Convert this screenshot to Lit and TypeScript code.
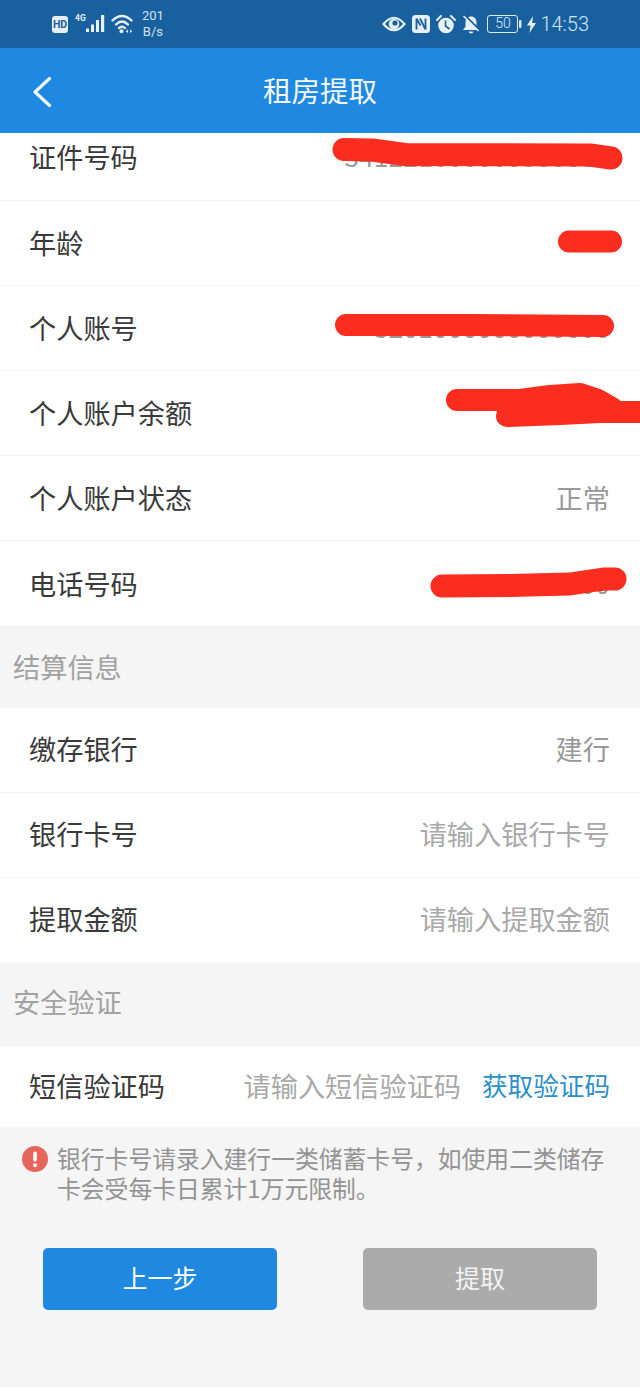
import { LitElement, html, css, svg } from "lit";
import { customElement } from "lit/decorators.js";

@customElement("app-root")
export class AppRoot extends LitElement {
  static styles = css`
    :host { display: block; position: relative; width: 640px; height: 1387px; overflow: hidden; background: #f5f5f5; font-family: "Noto Sans CJK SC", "Noto Sans", sans-serif; }
    .status { height: 48px; box-sizing: border-box; background: #19609f; color: #dcebf7; display: flex; align-items: center; justify-content: space-between; padding: 0 51px 0 52px; }
    .status-group { display: flex; align-items: center; height: 48px; }
    .status svg { display: block; flex: none; }
    .hd { width: 16px; height: 17px; border-radius: 3px; background: #e6f0f8; color: #19609f; font: 700 10.5px/17px "Roboto", sans-serif; text-align: center; }
    .g4 { font: 700 8.5px/9px "Roboto", sans-serif; align-self: flex-start; margin: 14px 0 0 7px; width: 11px; color: #e6f0f8; }
    .bars { margin-top: -1px; }
    .speed { font: 400 13px/15.5px "Roboto", sans-serif; text-align: center; margin-left: 8px; color: #cfe2f2; margin-top: -1px; }
    .batt { box-sizing: border-box; width: 31px; height: 18px; margin-left: 7px; border: 1.4px solid #dcebf7; border-radius: 3px; font: 300 14px/15px "Roboto", sans-serif; text-align: center; }
    .time { font: 300 20px/24px "Roboto", sans-serif; margin-left: 4px; color: #d3e5f3; }
    .ml1 { margin-left: 1px; }
    .ml5 { margin-left: 5px; }
    .ml6 { margin-left: 6px; }
    .header { height: 85px; box-sizing: border-box; padding-bottom: 2px; background: #1f88e0; color: #f3f9fe; display: flex; align-items: center; justify-content: center; position: relative; font-size: 28.5px; }
    .back { position: absolute; left: 33px; top: 29px; }
    .row { height: 85px; box-sizing: border-box; background: #fff; border-bottom: 1.5px solid #f4f4f4; display: flex; align-items: center; justify-content: space-between; padding: 0 30px 2px 29px; font-size: 27.2px; color: #3a3a3a; }
    .row.first { height: 67.5px; align-items: flex-start; padding-top: 3px; line-height: 40px; }
    .row.tall { height: 85.2px; }
    .row.low { padding-bottom: 4px; }
    .row.last { border-bottom: none; }
    .row.sms { height: 80px; border-bottom: none; padding-bottom: 4px; }
    .val { color: #999; }
    .val.num { font-size: 26.6px; }
    .val.ph { color: #a9a9a9; }
    .sms-right { display: flex; align-items: center; gap: 21px; }
    .sms-link { color: #2b8fcb; font-size: 25.6px; }
    .section { display: flex; align-items: center; box-sizing: border-box; padding-left: 13px; font-size: 27.2px; color: #a2a2a2; }
    .s1 { height: 81.5px; padding-bottom: 3px; }
    .s2 { height: 84px; padding-bottom: 8px; }
    .notice { display: flex; padding: 16px 30px 0 22px; font-size: 23.8px; line-height: 30px; color: #939393; }
    .notice-icon { flex: none; margin: 3px 9px 0 0; }
    .buttons { display: flex; gap: 86px; padding: 45px 43px 0; }
    .btn { width: 234px; height: 62px; box-sizing: border-box; padding-bottom: 3px; border-radius: 5px; color: #fff; display: flex; align-items: center; justify-content: center; font-size: 25px; }
    .btn.primary { background: #1f88e0; }
    .btn.off { background: #ababab; color: #f2f2f2; }
    .scribbles { position: absolute; left: 0; top: 0; pointer-events: none; }
  `;

  private row(label: string, value: string, cls = "", valCls = "") {
    return html`<div class="row ${cls}"><span>${label}</span><span class="val ${valCls}">${value}</span></div>`;
  }

  render() {
    return html`
      <div class="status">
        <div class="status-group">
          <div class="hd">HD</div>
          <div class="g4">4G</div>
          <svg class="bars" width="19" height="18" viewBox="0 0 19 18" fill="#e6f0f8"><rect x="0" y="13.500" width="3" height="3.500"/><rect x="5" y="9.500" width="3" height="7.500"/><rect x="10" y="5" width="3" height="12"/><rect x="15" y="0" width="3.200" height="17"/></svg>
          <svg class="ml6" width="23" height="20" viewBox="0 0 23 20" fill="none" stroke="#e6f0f8" stroke-width="2.400" stroke-linecap="round"><path d="M1.500 6.500 Q11 -2.500 20.500 6.500"/><path d="M5 10.500 Q11 4.500 17 10.500"/><path d="M8 14 Q11 11.500 14 14"/><circle cx="10.500" cy="17.300" r="2" fill="#e6f0f8" stroke="none"/><path d="M17 15.500l-2.200 1.800 2.200 1.800zM19 15.500l2.200 1.800-2.200 1.800z" fill="#e6f0f8" stroke="none"/></svg>
          <div class="speed">201<br />B/s</div>
        </div>
        <div class="status-group">
          <svg width="24" height="18" viewBox="0 0 24 18"><path d="M1.500 9 Q12 -3.500 22.500 9 Q12 21.500 1.500 9z" fill="#19609f" stroke="#e6f0f8" stroke-width="2.200"/><circle cx="12" cy="9" r="5.300" fill="#e6f0f8"/><circle cx="13" cy="8" r="2.600" fill="#19609f"/></svg>
          <svg class="ml6" width="18" height="18" viewBox="0 0 18 18"><rect width="18" height="18" rx="3.500" fill="#e6f0f8"/><path d="M4.500 3.500v11M8 3.500l5.500 11M13.500 3.500v11M4.500 3.500l4 7" stroke="#19609f" stroke-width="1.800" fill="none"/></svg>
          <svg class="ml6" width="20" height="19" viewBox="0 0 20 19"><circle cx="10" cy="10.500" r="7.800" fill="#e6f0f8"/><path d="M9.500 5.500v5.500l4 3" stroke="#19609f" stroke-width="1.600" fill="none"/><path d="M1 5l4-4M19 5l-4-4" stroke="#e6f0f8" stroke-width="2" stroke-linecap="round"/></svg>
          <svg class="ml6" width="18" height="19" viewBox="0 0 18 19"><path d="M9 1.500c-3.500 0-5.500 2.500-5.500 6v4L1 15h16l-2.500-3.500v-4C14.500 4 12.500 1.500 9 1.500z" fill="#e6f0f8"/><path d="M6.800 16.500h4.400a2.200 2 0 0 1-4.400 0z" fill="#e6f0f8"/><path d="M3 0.500l15 15" stroke="#19609f" stroke-width="2"/><path d="M1.500 1l15 15" stroke="#e6f0f8" stroke-width="1.600"/></svg>
          <div class="batt">50</div>
          <svg class="ml1" width="3" height="18" viewBox="0 0 3 18"><rect y="5" width="2.400" height="8" rx="1" fill="#dcebf7"/></svg>
          <svg class="ml5" width="9" height="17" viewBox="0 0 9 17"><path d="M6 0L0 9.500h3.500L2.500 17 9 7H5.200z" fill="#e6f0f8"/></svg>
          <div class="time">14:53</div>
        </div>
      </div>
      <div class="header">
        <svg class="back" width="19" height="30" viewBox="0 0 19 30" fill="none" stroke="#f3f9fe" stroke-width="3.200" stroke-linecap="round" stroke-linejoin="round"><path d="M16.500 1.500L2 15l14.500 13.500"/></svg>
        <span>租房提取</span>
      </div>
      ${this.row("证件号码", "341221000000000000", "first", "num")}
      ${this.row("年龄", "", "tall")}
      ${this.row("个人账号", "3201000000000000", "tall", "num")}
      ${this.row("个人账户余额", "", "tall")}
      ${this.row("个人账户状态", "正常", "tall")}
      ${this.row("电话号码", "13800000000", "tall last", "num")}
      <div class="section s1">结算信息</div>
      ${this.row("缴存银行", "建行", "low")}
      ${this.row("银行卡号", "请输入银行卡号", "low", "ph")}
      ${this.row("提取金额", "请输入提取金额", "low last", "ph")}
      <div class="section s2">安全验证</div>
      <div class="row sms">
        <span>短信验证码</span>
        <div class="sms-right"><span class="val ph">请输入短信验证码</span><span class="sms-link">获取验证码</span></div>
      </div>
      <div class="notice">
        <svg class="notice-icon" width="26" height="26" viewBox="0 0 26 26"><circle cx="13" cy="13" r="13" fill="#e8655c"/><rect x="11.200" y="5.500" width="3.600" height="10" rx="1.800" fill="#fff"/><circle cx="13" cy="19.300" r="2" fill="#fff"/></svg>
        <div>银行卡号请录入建行一类储蓄卡号，如使用二类储存卡会受每卡日累计1万元限制。</div>
      </div>
      <div class="buttons">
        <div class="btn primary">上一步</div>
        <div class="btn off">提取</div>
      </div>
      <svg class="scribbles" width="640" height="1387" viewBox="0 0 640 1387" fill="none" stroke="#fb2d1f" stroke-width="22" stroke-linecap="round" stroke-linejoin="round">
        ${svg`
        <path d="M344 149.500L372 150L405 154.500L590 155L611 158" stroke-width="23"/>
        <path d="M569 241.500L611 241.500"/>
        <path d="M346 325L470 325L603 326"/>
        <path d="M457 400L520 400L550 396L580 394L598 400L612 408"/>
        <path d="M507 416L560 414L600 412L640 412"/>
        <path d="M442 586L510 585.500L570 584L590 581L605 579L615 579" stroke-width="23"/>
        `}
      </svg>
    `;
  }
}
